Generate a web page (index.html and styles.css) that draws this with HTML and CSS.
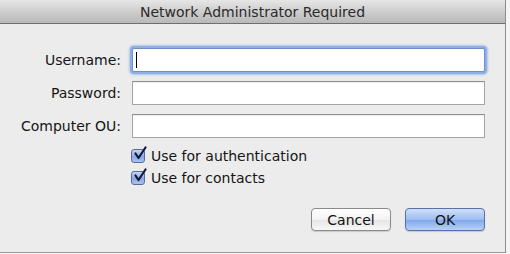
FILE: index.html
```html
<!DOCTYPE html>
<html lang="en">
<head>
    <meta charset="UTF-8">
    <title>Network Administrator Required</title>
    <link rel="stylesheet" href="styles.css">
</head>
<body>

    <div class="window">
        <div class="titlebar">Network Administrator Required</div>

        <div class="content">
            <!-- Credentials -->
            <div class="form">
                <label for="username">Username:</label>
                <div class="field focused"><span class="caret"></span></div>

                <label for="password">Password:</label>
                <div class="field"></div>

                <label for="ou">Computer OU:</label>
                <div class="field"></div>
            </div>

            <!-- Options -->
            <div class="options">
                <div class="check-row">
                    <span class="checkbox">
                        <svg width="16" height="16" viewBox="0 0 16 16"><path d="M3.5 7.5 L6.5 12 L13.5 1.5" fill="none" stroke="#14183a" stroke-width="2.2" stroke-linecap="round" stroke-linejoin="round"/></svg>
                    </span>
                    Use for authentication
                </div>
                <div class="check-row">
                    <span class="checkbox">
                        <svg width="16" height="16" viewBox="0 0 16 16"><path d="M3.5 7.5 L6.5 12 L13.5 1.5" fill="none" stroke="#14183a" stroke-width="2.2" stroke-linecap="round" stroke-linejoin="round"/></svg>
                    </span>
                    Use for contacts
                </div>
            </div>

            <div class="buttons">
                <button class="btn">Cancel</button>
                <button class="btn default">OK</button>
            </div>
        </div>
    </div>

</body>
</html>
```
FILE: styles.css
```css
/* Page */
body {
    margin: 0;
    background-color: #f4f4f4;
    font-family: "DejaVu Sans", "Liberation Sans", sans-serif;
    font-size: 14px;
    color: #151515;
}

/* Window frame */
.window {
    width: 505px;
    height: 252px;
    background-color: #ececec;
    border-right: 1px solid #8c8c8c;
    border-bottom: 1px solid #9a9a9a;
    display: flex;
    flex-direction: column;
}

.titlebar {
    height: 23px;
    line-height: 25px;
    text-align: center;
    color: #2a2a2a;
    background: linear-gradient(#e6e6e6, #c9c9c9 60%, #b9b9b9);
    border-bottom: 1px solid #6e6e6e;
}

.content {
    padding: 24px 20px 0 0;
}

/* Form grid */
.form {
    display: grid;
    grid-template-columns: 121px 353px;
    column-gap: 11px;
    row-gap: 9px;
    align-items: center;
}

.form label {
    text-align: right;
    white-space: nowrap;
}

.field {
    height: 22px;
    background-color: #fff;
    border: 1px solid #a4a4a4;
    border-top-color: #8e8e8e;
    box-shadow: inset 0 1px 1px rgba(0, 0, 0, 0.08);
    display: flex;
    align-items: center;
}

.field.focused {
    border-color: #6f8fc8;
    box-shadow: 0 0 0 2px #8eaee4, 0 0 2px 3px rgba(120, 160, 225, 0.5);
    border-radius: 2px;
}

.caret {
    width: 1px;
    height: 16px;
    margin-left: 3px;
    background-color: #000;
}

/* Checkboxes */
.options {
    margin: 9px 0 0 131px;
    display: flex;
    flex-direction: column;
    gap: 4px;
}

.check-row {
    display: flex;
    align-items: center;
    gap: 6px;
    height: 18px;
}

.checkbox {
    position: relative;
    width: 12px;
    height: 12px;
    border: 1px solid #5a6c9c;
    border-radius: 3px;
    background: linear-gradient(#c6d7f4, #8aa9e0 55%, #a9c3ef);
}

.checkbox svg {
    position: absolute;
    left: 0;
    top: -4px;
}

/* Buttons */
.buttons {
    display: flex;
    justify-content: flex-end;
    gap: 14px;
    margin-top: 21px;
}

.btn {
    width: 80px;
    height: 23px;
    font-family: inherit;
    font-size: 14px;
    color: #111;
    border: 1px solid #8a8a8a;
    border-radius: 4px;
    background: linear-gradient(#ffffff, #f3f3f3 50%, #e4e4e4 51%, #f7f7f7);
    box-shadow: 0 1px 1px rgba(0, 0, 0, 0.15);
    padding: 0;
}

.btn.default {
    border-color: #5b6fa8;
    background: linear-gradient(#cfe0fb, #9ebdf1 50%, #7ea5ea 51%, #b7d2fa);
}
```
